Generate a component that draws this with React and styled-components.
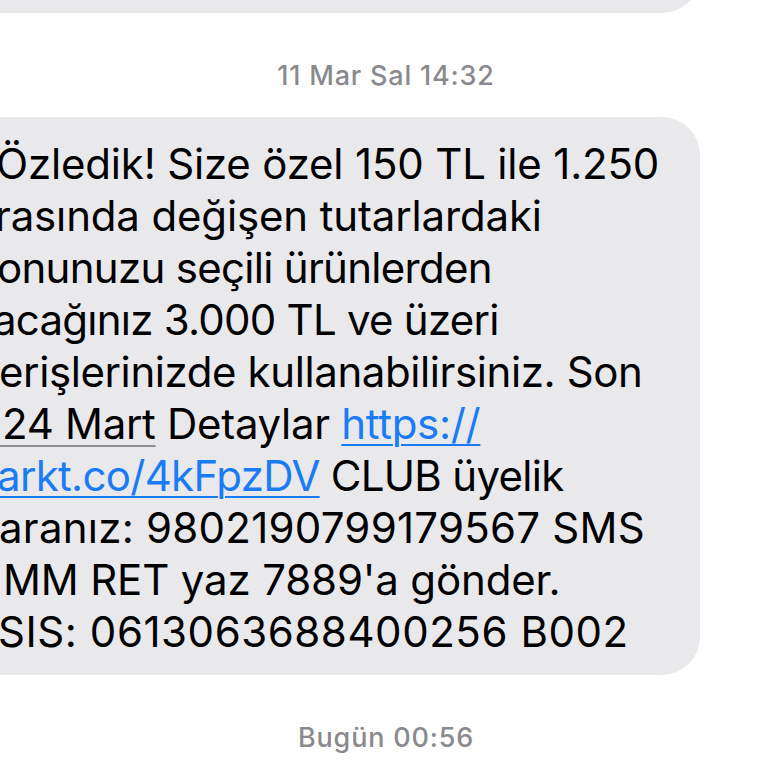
import React from 'react';
import styled, { createGlobalStyle } from 'styled-components';

const Global = createGlobalStyle`
  html, body {
    margin: 0;
    padding: 0;
    background: #fff;
    overflow: hidden;
  }
  body {
    font-family: Inter, "Noto Sans", "Liberation Sans", sans-serif;
    -webkit-font-smoothing: antialiased;
  }
`;

const Thread = styled.div`
  width: 768px;
  height: 768px;
  display: flex;
  flex-direction: column;
`;

const Bubble = styled.div`
  flex: none;
  width: 800px;
  margin-left: -100px;
  background: #e9e9eb;
  border-radius: 38px;
  color: #000;
  font-size: 42px;
  line-height: 52px;
`;

const PrevBubble = styled(Bubble)`
  height: 120px;
  margin-top: -107px;
`;

const MainBubble = styled(Bubble)`
  padding: 21px 0 17px 100px;
  box-sizing: border-box;
`;

const Stamp = styled.div`
  flex: none;
  padding: 47px 0 25px 4px;
  line-height: 32px;
  text-align: center;
  color: #8a8a8e;
  font-size: 27px;
  font-weight: 500;
  letter-spacing: 0.8px;
`;

// the message runs past the left edge, so each line says where its visible part starts
const Line = styled.div`
  white-space: nowrap;
  margin-left: ${p => p.$x}px;
  letter-spacing: ${p => p.$ls ?? -0.3}px;
`;

const Link = styled.span`
  color: #1a7cf5;
  text-decoration: underline;
  text-decoration-thickness: 2px;
  text-underline-offset: 5px;
`;

const DateMark = styled.span`
  text-decoration: underline;
  text-decoration-color: #8e8e93;
  text-decoration-thickness: 1.5px;
  text-underline-offset: 6px;
`;

export default function App() {
  return (
    <>
      <Global />
      <Thread>
        <PrevBubble />
        <Stamp>11 Mar Sal 14:32</Stamp>
        <MainBubble>
          <Line $x={-4} $ls={-0.18}>Özledik! Size özel 150 TL ile 1.250</Line>
          <Line $x={-5} $ls={-0.15}>rasında değişen tutarlardaki</Line>
          <Line $x={-3} $ls={-0.7}>onunuzu seçili ürünlerden</Line>
          <Line $x={-7} $ls={-0.75}>acağınız 3.000 TL ve üzeri</Line>
          <Line $x={-1} $ls={-0.4}>erişlerinizde kullanabilirsiniz. Son</Line>
          <Line $x={-21}>
            <DateMark>{'\u00a0 24 Mart'}</DateMark> Detaylar <Link>https://</Link>
          </Line>
          <Line $x={-3} $ls={-0.7}>
            <Link>arkt.co/4kFpzDV</Link> CLUB üyelik
          </Line>
          <Line $x={-1} $ls={0.25}>aranız: 9802190799179567 SMS</Line>
          <Line $x={3} $ls={-0.15}>MM RET yaz 7889'a gönder.</Line>
          <Line $x={-2} $ls={0.55}>SIS: 0613063688400256 B002</Line>
        </MainBubble>
        <Stamp>Bugün 00:56</Stamp>
      </Thread>
    </>
  );
}
